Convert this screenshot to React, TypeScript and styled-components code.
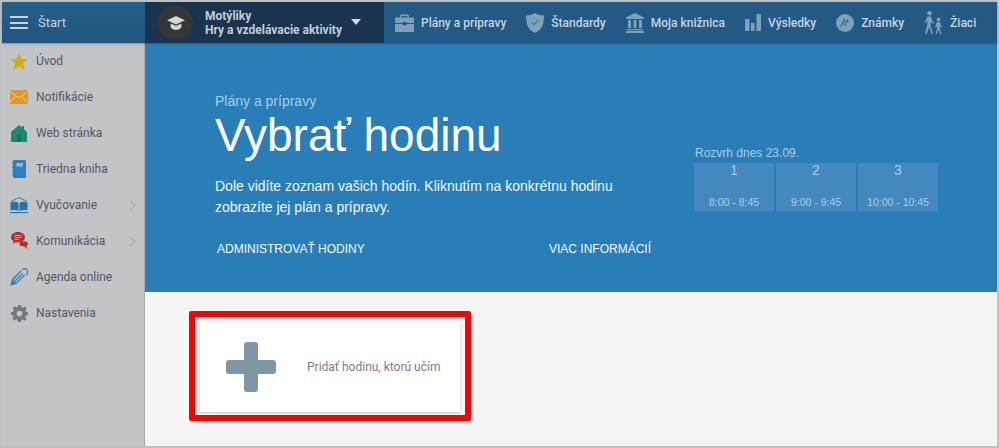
import { ReactNode } from 'react'
import styled, { createGlobalStyle } from 'styled-components'

const GlobalStyle = createGlobalStyle`
  html, body {
    margin: 0;
    padding: 0;
    background: #c2c3c5;
  }
  * {
    box-sizing: border-box;
  }
`

const Frame = styled.div`
  width: 999px;
  height: 448px;
  padding: 2px;
  background: #c0c1c3;
  display: flex;
  flex-direction: column;
  overflow: hidden;
  font-family: Roboto, 'Liberation Sans', sans-serif;
`

const TopBar = styled.header`
  height: 41px;
  flex: none;
  display: flex;
  background: #225a85;
  box-shadow: 0 1px 2px rgba(0, 0, 0, 0.25);
  position: relative;
`

const StartButton = styled.div`
  width: 143px;
  flex: none;
  display: flex;
  align-items: center;
  gap: 10px;
  padding-left: 8px;
  color: #c6d3dd;
  font-size: 13px;
  background: linear-gradient(#22608c, #22557e);
`

const Burger = styled.span`
  width: 18px;
  height: 13px;
  border-top: 2px solid #c6d3dd;
  border-bottom: 2px solid #c6d3dd;
  position: relative;

  &::after {
    content: '';
    position: absolute;
    left: 0;
    right: 0;
    top: 3.5px;
    height: 2px;
    background: #c6d3dd;
  }
`

const ClassPicker = styled.div`
  width: 239px;
  flex: none;
  display: flex;
  align-items: center;
  padding-left: 13px;
  background: #18344f;
  color: #c3ccd4;
`

const Avatar = styled.div`
  width: 35px;
  height: 35px;
  border-radius: 50%;
  background: #343538;
  display: flex;
  align-items: center;
  justify-content: center;
  flex: none;
`

const ClassText = styled.div`
  margin-left: 12px;
  font-size: 12px;
  font-weight: 700;
  line-height: 14px;
  white-space: nowrap;
`

const Caret = styled.span`
  margin-left: 9px;
  margin-bottom: 2px;
  border-left: 5.5px solid transparent;
  border-right: 5.5px solid transparent;
  border-top: 6px solid #d5dade;
`

const Nav = styled.nav`
  display: flex;
  align-items: center;
  gap: 20px;
  padding-left: 11px;
`

const NavItem = styled.div`
  display: flex;
  align-items: center;
  gap: 7px;
  color: #c8d2da;
  font-size: 12px;
  font-weight: 500;
  white-space: nowrap;
`

const Body = styled.div`
  flex: 1;
  min-height: 0;
  display: flex;
`

const Sidebar = styled.aside`
  width: 143px;
  flex: none;
  padding-top: 0;
  background: #c3c4c6;
  border-right: 1px solid #a9aaac;
`

const SideRow = styled.div`
  height: 36px;
  display: flex;
  align-items: center;
  gap: 8px;
  padding: 0 8px;
  color: #55566a;
  font-size: 12px;
`

const SideIcon = styled.span`
  width: 18px;
  height: 18px;
  flex: none;
  display: flex;
  align-items: center;
  justify-content: center;
`

const Chevron = styled.span`
  margin-left: auto;
  margin-right: 2px;
  width: 7px;
  height: 7px;
  border-top: 1px solid #a5a7aa;
  border-right: 1px solid #a5a7aa;
  transform: rotate(45deg);
`

const Main = styled.main`
  flex: 1;
  min-width: 0;
  display: flex;
  flex-direction: column;
  background: #f5f5f5;
`

const Hero = styled.section`
  height: 249px;
  flex: none;
  display: flex;
  background: #2a7eb8;
  overflow: hidden;
  font-family: 'Liberation Sans', Arial, sans-serif;
`

const HeroText = styled.div`
  width: 549px;
  flex: none;
  padding: 50px 0 0 70px;
`

const Crumb = styled.div`
  color: #a9cce4;
  font-size: 14px;
  line-height: 16px;
`

const Title = styled.h1`
  margin: 0;
  color: #fff;
  font-size: 46px;
  font-weight: 400;
  line-height: 52px;
  white-space: nowrap;
`

const Lead = styled.p`
  margin: 15px 0 0;
  color: #f2f7fb;
  font-size: 14px;
  line-height: 21px;
  white-space: nowrap;
`

const HeroLinks = styled.div`
  display: grid;
  grid-template-columns: 332px auto;
  margin-top: 24px;
  padding-left: 2px;
  color: #f2f7fb;
  font-size: 12px;
  line-height: 14px;
  white-space: nowrap;
`

const Schedule = styled.div`
  padding-top: 103px;
  flex: none;
`

const ScheduleTitle = styled.div`
  padding-left: 1px;
  color: #a9cce4;
  font-size: 12px;
  line-height: 14px;
  margin-bottom: 3px;
`

const Slots = styled.div`
  display: flex;
  gap: 2px;
`

const Slot = styled.div`
  width: 80px;
  height: 48px;
  padding-top: 0;
  display: flex;
  flex-direction: column;
  justify-content: space-between;
  align-items: center;
  background: #4289bf;
  color: #a9cce4;
  white-space: nowrap;
`

const SlotNumber = styled.span`
  font-size: 14px;
  line-height: 14px;
`

const SlotTime = styled.span`
  font-size: 10.5px;
  line-height: 12px;
  margin-bottom: 3px;
`

const Content = styled.div`
  padding: 19px 0 0 44px;
`

const Highlight = styled.div`
  width: 282px;
  height: 110px;
  padding: 5px;
  border: 6px solid #ff0000;
  border-radius: 2px;
`

const AddCard = styled.div`
  height: 90px;
  display: flex;
  align-items: center;
  padding-left: 26px;
  gap: 31px;
  background: #fff;
  box-shadow: 0 1px 2px rgba(0, 0, 0, 0.2);
  color: #7b7e83;
  font-size: 12px;
  white-space: nowrap;
`

const PlusIcon = () => (
  <svg width="50" height="50" viewBox="0 0 50 50">
    <path
      fill="#7f97a3"
      d="M21 0h8a3 3 0 0 1 3 3v15h15a3 3 0 0 1 3 3v8a3 3 0 0 1-3 3H32v15a3 3 0 0 1-3 3h-8a3 3 0 0 1-3-3V32H3a3 3 0 0 1-3-3v-8a3 3 0 0 1 3-3h15V3a3 3 0 0 1 3-3z"
    />
  </svg>
)

const CapIcon = () => (
  <svg width="18" height="14" viewBox="0 0 18 14" fill="#d5d6d6">
    <path d="M9 0 18 4.2 9 8.4 0 4.2z" />
    <path d="M3.6 7.6 9 10.1l5.4-2.5v3.6C13 13 11 14 9 14s-4-1-5.4-2.8z" />
  </svg>
)

const navFill = '#7ea0b8'

const BriefcaseIcon = () => (
  <svg width="19" height="18" viewBox="0 0 19 18">
    <path fill="none" stroke={navFill} strokeWidth="1.4" d="M6 4V1.2h7V4" />
    <path fill={navFill} d="M0 3.5h19V9H11.5V8h-4v1H0zM0 10h7.5v1.2h4V10H19v8H0z" />
  </svg>
)

const ShieldIcon = () => (
  <svg width="18" height="20" viewBox="0 0 18 20">
    <path fill={navFill} d="M9 0c2.5 1.6 5.5 2.4 9 2.5 0 8-1.500 14-9 17.500C1.500 16.500 0 10.500 0 2.500 3.500 2.400 6.500 1.600 9 0z" />
    <path fill="none" stroke="#265d87" strokeWidth="1" d="M6 9.500l2.200 2.200L12.500 7" />
  </svg>
)

const BankIcon = () => (
  <svg width="18" height="20" viewBox="0 0 18 20" fill={navFill}>
    <path d="M9 0 18 4.500V6H0V4.500z" />
    <path d="M2 7h3v8H2zM7.500 7h3v8h-3zM13 7h3v8h-3zM1 16h16v1.200H1zM0 18h18v2H0z" />
  </svg>
)

const BarsIcon = () => (
  <svg width="16" height="17" viewBox="0 0 16 17" fill={navFill}>
    <path d="M0 5h4.500v12H0zM6 9h3.500v8H6zM11.500 0H16v17h-4.500z" />
  </svg>
)

const GradeIcon = () => (
  <svg width="18" height="18" viewBox="0 0 18 18">
    <circle cx="9" cy="9" r="9" fill={navFill} />
    <path fill="none" stroke="#33658c" strokeWidth="1" d="M4.500 13 8 5l2 7M5.800 10h3.400M11.500 5.500v3.500M9.800 7.200h3.500" />
  </svg>
)

const WalkersIcon = () => (
  <svg width="19" height="24" viewBox="0 0 19 24" fill={navFill}>
    <circle cx="5.500" cy="2.300" r="2.300" />
    <path d="M3.500 5.500h3.600l1.300 4.700 2 1.600-.8 1-2.600-1.800-.4 3.500 2.200 8.500H7.400l-2.300-7-2.400 7H1l2.400-9.500L3.100 9.500 1.500 12l-1-.6z" />
    <circle cx="14.500" cy="8.500" r="1.900" />
    <path d="M13 11h3l1 3.500 1.500 1-.6.900-1.900-1.100-.2 2 1.700 6h-1.200l-1.800-5-1.800 5h-1.200l1.700-6.200-.2-2-1 1.300-.9-.6z" />
  </svg>
)

const StarIcon = () => (
  <svg width="18" height="17" viewBox="0 0 18 17">
    <path fill="#d4ac0d" d="M9 0l2.500 6H18l-5.100 4 1.900 7L9 13l-5.800 4 1.900-7L0 6h6.500z" />
  </svg>
)

const MailIcon = () => (
  <svg width="18" height="14" viewBox="0 0 18 14">
    <rect width="18" height="14" fill="#dd9a2c" />
    <path fill="none" stroke="#f1cf95" strokeWidth="0.9" d="M0 1.500l9 6.500 9-6.500M0 12.500l6-6.200M18 12.500l-6-6.200" />
  </svg>
)

const HomeIcon = () => (
  <svg width="16" height="17" viewBox="0 0 16 17">
    <path fill="#1c8a72" d="M8 0l3 2.500V1h2v3.200L16 7v10H0V7z" />
    <path fill="#0f6f5b" d="M6.200 9.500h3.600V17H6.200z" />
    <path fill="#4eae98" d="M7 12h1v1H7z" />
  </svg>
)

const NotebookIcon = () => (
  <svg width="14" height="18" viewBox="0 0 14 18">
    <rect x="1" width="13" height="18" rx="1" fill="#2f80bd" />
    <path fill="none" stroke="#2f80bd" strokeWidth="1" d="M0 2.500h2M0 5h2M0 7.500h2M0 10h2M0 12.500h2M0 15h2" />
    <rect x="4.500" y="3" width="6.500" height="3.500" fill="#8cbbdc" />
  </svg>
)

const BookIcon = () => (
  <svg width="18" height="17" viewBox="0 0 18 17" fill="#2574ad">
    <path fill="none" stroke="#2574ad" strokeWidth="0.9" d="M1 4.500 9 .6l8 3.900" />
    <path d="M.5 5.500C3.500 4.500 6.500 4.700 8.500 6v8C6.500 13 3.500 12.800.5 13.500zM17.500 5.500c-3-1-6-.8-8 .5v8c2-1 5-1.200 8-.5z" />
    <path d="M0 15h18v1.200H0z" />
  </svg>
)

const ChatIcon = () => (
  <svg width="17" height="18" viewBox="0 0 17 18">
    <path fill="#b0322a" d="M7 0c4 0 7 2.300 7 5.300 0 3-3 5.200-7 5.200-.8 0-1.500-.1-2.200-.2L1.500 12l1-3C1 8 0 6.700 0 5.300 0 2.300 3 0 7 0z" />
    <path fill="#b0322a" d="M11 9.500h3.500c1.400 0 2.500.9 2.500 2.200 0 1.200-.7 2-1.700 2.300l1.200 3.300-3.600-3.100H11c-1.400 0-2.500-.9-2.500-2.300 0-1.300 1.100-2.400 2.500-2.400z" />
    <path fill="none" stroke="#e9b5b0" strokeWidth="0.9" d="M3.500 3.500h7M3.500 5.500h7M3.500 7.500h4.500" />
  </svg>
)

const PenIcon = () => (
  <svg width="18" height="18" viewBox="0 0 18 18">
    <path fill="#3b82b9" d="M0 18l2-7L10.500 2.500l1 1L3.500 12l.8.8L12.300 4.800l1 1-8 8 .8.8 8-8 1 1L6.500 16z" />
    <path fill="none" stroke="#3b82b9" strokeWidth="1.300" d="M12 1.500c2-1 4-.8 5 .2 1 1 .5 3.500-.8 5.300" />
  </svg>
)

const GearIcon = () => (
  <svg width="17" height="17" viewBox="0 0 24 24">
    <path
      fill="#6e7b80"
      fillRule="evenodd"
      d="M10 0h4l.6 3.200 2 .8L19.300 2.200l2.800 2.800-1.800 2.700.8 2 3.200.6v4l-3.200.6-.8 2 1.800 2.700-2.800 2.800-2.700-1.800-2 .8L14 24h-4l-.6-3.200-2-.8-2.700 1.800-2.800-2.800 1.800-2.700-.8-2L0 14v-4l3.200-.6.8-2-1.800-2.700 2.800-2.800L7.700 3.700l2-.8zM12 8a4 4 0 1 0 0 8 4 4 0 0 0 0-8z"
    />
  </svg>
)

type NavLink = { label: string; icon: ReactNode }
type SideLink = { label: string; icon: ReactNode; nested?: boolean }

const navLinks: NavLink[] = [
  { label: 'Plány a prípravy', icon: <BriefcaseIcon /> },
  { label: 'Štandardy', icon: <ShieldIcon /> },
  { label: 'Moja knižnica', icon: <BankIcon /> },
  { label: 'Výsledky', icon: <BarsIcon /> },
  { label: 'Známky', icon: <GradeIcon /> },
  { label: 'Žiaci', icon: <WalkersIcon /> },
]

const sideLinks: SideLink[] = [
  { label: 'Úvod', icon: <StarIcon /> },
  { label: 'Notifikácie', icon: <MailIcon /> },
  { label: 'Web stránka', icon: <HomeIcon /> },
  { label: 'Triedna kniha', icon: <NotebookIcon /> },
  { label: 'Vyučovanie', icon: <BookIcon />, nested: true },
  { label: 'Komunikácia', icon: <ChatIcon />, nested: true },
  { label: 'Agenda online', icon: <PenIcon /> },
  { label: 'Nastavenia', icon: <GearIcon /> },
]

const slots = [
  { number: 1, time: '8:00 - 8:45' },
  { number: 2, time: '9:00 - 9:45' },
  { number: 3, time: '10:00 - 10:45' },
]

export default function App() {
  return (
    <Frame>
      <GlobalStyle />
      <TopBar>
        <StartButton>
          <Burger />
          Štart
        </StartButton>
        <ClassPicker>
          <Avatar>
            <CapIcon />
          </Avatar>
          <ClassText>
            Motýliky
            <br />
            Hry a vzdelávacie aktivity
          </ClassText>
          <Caret />
        </ClassPicker>
        <Nav>
          {navLinks.map((link) => (
            <NavItem key={link.label}>
              {link.icon}
              {link.label}
            </NavItem>
          ))}
        </Nav>
      </TopBar>
      <Body>
        <Sidebar>
          {sideLinks.map((link) => (
            <SideRow key={link.label}>
              <SideIcon>{link.icon}</SideIcon>
              {link.label}
              {link.nested && <Chevron />}
            </SideRow>
          ))}
        </Sidebar>
        <Main>
          <Hero>
            <HeroText>
              <Crumb>Plány a prípravy</Crumb>
              <Title>Vybrať hodinu</Title>
              <Lead>
                Dole vidíte zoznam vašich hodín. Kliknutím na konkrétnu hodinu
                <br />
                zobrazíte jej plán a prípravy.
              </Lead>
              <HeroLinks>
                <span>ADMINISTROVAŤ HODINY</span>
                <span>VIAC INFORMÁCIÍ</span>
              </HeroLinks>
            </HeroText>
            <Schedule>
              <ScheduleTitle>Rozvrh dnes 23.09.</ScheduleTitle>
              <Slots>
                {slots.map((slot) => (
                  <Slot key={slot.number}>
                    <SlotNumber>{slot.number}</SlotNumber>
                    <SlotTime>{slot.time}</SlotTime>
                  </Slot>
                ))}
              </Slots>
            </Schedule>
          </Hero>
          <Content>
            <Highlight>
              <AddCard>
                <PlusIcon />
                Pridať hodinu, ktorú učím
              </AddCard>
            </Highlight>
          </Content>
        </Main>
      </Body>
    </Frame>
  )
}
